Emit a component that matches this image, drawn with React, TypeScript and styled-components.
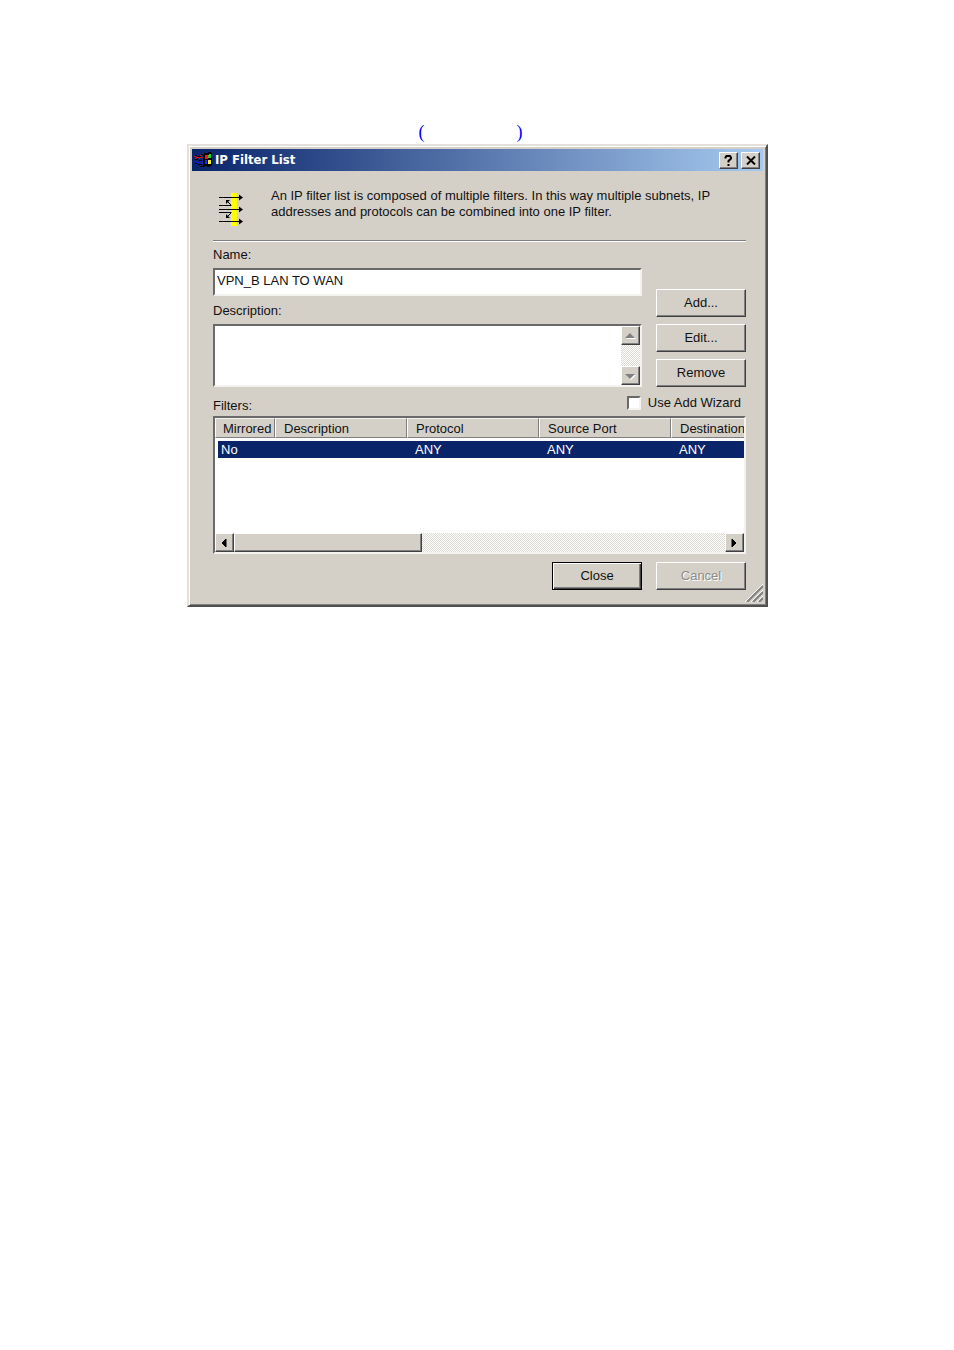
import React, { useState } from "react";
import styled, { createGlobalStyle, css } from "styled-components";

const face = "#d4d0c8";
const navy = "#0a246a";

const GlobalStyle = createGlobalStyle`
  * { box-sizing: border-box; }
  body {
    margin: 0;
    background: #fff;
    color: #111;
    font-family: "Liberation Sans", Arial, sans-serif;
    font-size: 13px;
    line-height: 16px;
  }
  button, input, textarea { font: inherit; color: inherit; }
`;

const raised = css`
  border: 1px solid;
  border-color: #fff #404040 #404040 #fff;
  box-shadow: inset -1px -1px 0 #808080;
`;

const sunken = css`
  border: 2px solid;
  border-color: #6a6a6a #f4f3f0 #f4f3f0 #6a6a6a;
  background: #fff;
`;

const Page = styled.main`
  padding: 122px 8px 40px 9px;
`;

const Caption = styled.p`
  display: flex;
  justify-content: center;
  gap: 92px;
  margin: 0;
  padding: 0 14px 2px 0;
  color: #00f;
  font-family: "Liberation Serif", serif;
  font-size: 18px;
  line-height: 20px;
`;

const Dialog = styled.section`
  width: 100%;
  max-width: 581px;
  margin: 0 auto;
  padding: 3px;
  background: ${face};
  border: 2px solid;
  border-color: #e4e1dc #505050 #505050 #e4e1dc;
  box-shadow: inset 1px 1px 0 #fff, inset -1px -1px 0 #808080;
`;

const TitleBar = styled.header`
  display: flex;
  align-items: center;
  gap: 2px;
  height: 22px;
  padding: 0 3px 0 1px;
  background: linear-gradient(90deg, ${navy}, #a6caf0);
`;

const Title = styled.h1`
  flex: 1;
  margin: 0;
  color: #fff;
  font-family: "DejaVu Sans Condensed", "DejaVu Sans", sans-serif;
  font-stretch: condensed;
  font-size: 13px;
  font-weight: bold;
  line-height: 16px;
`;

const CaptionButton = styled.button`
  ${raised}
  display: grid;
  place-items: center;
  width: 19px;
  height: 17px;
  padding: 0;
  margin-left: 1px;
  background: ${face};
`;

const Body = styled.div`
  padding: 17px 17px 12px 21px;
`;

const Intro = styled.div`
  display: flex;
  gap: 27px;
  padding: 0 32px 14px 5px;

  svg { flex: none; margin-top: 4px; }
  p { margin: 0; }
`;

const Rule = styled.hr`
  margin: 0 0 5px;
  border: 0;
  border-top: 1px solid #808080;
  border-bottom: 1px solid #fff;
`;

const Columns = styled.div`
  display: flex;
  align-items: flex-end;
  gap: 14px;
`;

const Fields = styled.div`
  flex: 1;
  min-width: 0;
`;

const FieldLabel = styled.label`
  display: block;
  margin-bottom: 5px;
`;

const TextInput = styled.input`
  ${sunken}
  display: block;
  width: 100%;
  height: 28px;
  margin-bottom: 7px;
  padding: 0 2px 4px;
  outline: none;
`;

const AreaFrame = styled.div`
  ${sunken}
  display: flex;
  height: 63px;
`;

const Area = styled.textarea`
  flex: 1;
  min-width: 0;
  padding: 2px;
  border: 0;
  outline: none;
  resize: none;
  overflow: hidden;
  background: transparent;
`;

const Track = styled.div<{ $vertical?: boolean }>`
  display: flex;
  flex-direction: ${(p) => (p.$vertical ? "column" : "row")};
  justify-content: space-between;
  background: repeating-conic-gradient(#fff 0 25%, #dcd9d3 0 50%) 0 0 / 2px 2px;
`;

const ArrowButton = styled.button`
  ${raised}
  display: grid;
  place-items: center;
  flex: none;
  width: 19px;
  height: 19px;
  padding: 0;
  background: ${face};
`;

const Thumb = styled.div`
  ${raised}
  width: 188px;
  margin-right: auto;
  background: ${face};
`;

const Buttons = styled.div`
  display: flex;
  flex-direction: column;
  gap: 7px;
`;

const PushButton = styled.button<{ $primary?: boolean }>`
  ${raised}
  width: 90px;
  height: 28px;
  padding: 0;
  background: ${face};
  ${(p) =>
    p.$primary &&
    css`
      border-color: #000;
      box-shadow: inset 1px 1px 0 #fff, inset -1px -1px 0 #404040, inset -2px -2px 0 #808080;
    `}
  &:disabled {
    color: #8e8c88;
    text-shadow: 1px 1px 0 #fff;
  }
`;

const FilterHeading = styled.div`
  display: flex;
  justify-content: space-between;
  align-items: center;
  height: 29px;
  padding: 2px 5px 0 0;
`;

const FilterTitle = styled.span`
  padding-top: 6px;
`;

const CheckLabel = styled.label`
  display: flex;
  align-items: center;
  gap: 7px;
`;

const CheckBox = styled.input`
  ${sunken}
  appearance: none;
  width: 14px;
  height: 14px;
  margin: 0;
  &:checked {
    background: radial-gradient(#000 40%, #fff 45%);
  }
`;

const ListBox = styled.div`
  ${sunken}
  display: flex;
  flex-direction: column;
  justify-content: space-between;
  height: 138px;
  overflow: hidden;
`;

const FilterTable = styled.table`
  width: 100%;
  table-layout: fixed;
  border-spacing: 0;

  th, td {
    overflow: hidden;
    white-space: nowrap;
    text-align: left;
    font-weight: normal;
  }
  th {
    height: 20px;
    padding: 1px 0 0 8px;
    background: ${face};
    border: 1px solid;
    border-color: #f4f3f0 #808080 #808080 #fff;
  }
  th:first-child { padding-left: 7px; }
  th:last-child { border-right: 0; }
  td {
    height: 20px;
    padding: 0 0 0 8px;
    color: #fff;
    background: ${navy};
    background-clip: padding-box;
    border-top: 3px solid #fff;
  }
  td:first-child {
    padding-left: 3px;
    border-left: 3px solid #fff;
  }
`;

const Footer = styled.footer`
  display: flex;
  justify-content: flex-end;
  gap: 14px;
  padding-top: 8px;
`;

const Corner = styled.div`
  display: flex;
  justify-content: flex-end;
  height: 18px;
  margin-top: -18px;
`;

function FlagIcon() {
  return (
    <svg width="20" height="16" viewBox="0 0 20 16" shapeRendering="crispEdges" aria-hidden="true">
      <path fill="#000" d="M11 1h4v-1h3v1h1v13h-2v1h-3v-1h-2v1h-2v-12h1zM2 3h2v1h-2zM5 4h3v1h-3zM2 7h3v1h-3zM6 8h3v1h-3zM2 11h2v1h-2zM5 12h4v1h-4zM8 2h2v1h-2zM7 14h3v1h-3z" />
      <path fill="#d01028" d="M1 4h2v1h-2zM3 5h3v1h-3zM6 6h1v1h-1zM7 5h3v1h-3zM2 6h2v1h-2zM7 3h2v1h-2z" />
      <path fill="#1818d8" d="M1 9h2v1h-2zM3 10h3v1h-3zM6 11h4v1h-4zM2 12h2v1h-2zM7 9h3v1h-3z" />
      <path fill="#f01828" d="M12 3h3v4h-3z" />
      <path fill="#20d820" d="M16 2h2v4h-2zM15 3h1v3h-1z" />
      <path fill="#1828f8" d="M12 8h2v4h-2z" />
      <path fill="#f8f020" d="M15 8h3v4h-3z" />
    </svg>
  );
}

function FilterIcon() {
  return (
    <svg width="26" height="34" viewBox="0 0 26 34" aria-hidden="true">
      <path fill="#ff0" d="M13 1h6v33h-6z" />
      <path
        stroke="#000"
        fill="none"
        d="M1 5.500h22M1 17.500h22M1 29.500h22M1 13.500h12.500M1 20.500h12.500M9.500 9.500l3.500 3.500M9.500 24.500l3.500 -3.500"
      />
      <path d="M8 8h4l-4 4zM8 26h4l-4 -4z" />
      <path d="M21 2.500l4 3l-4 3zM21 14.500l4 3l-4 3zM21 26.500l4 3l-4 3z" />
    </svg>
  );
}

const arrows = {
  up: "M0 7h10l-5 -5z",
  down: "M0 3h10l-5 5z",
  left: "M7 1v8l-4 -4z",
  right: "M3 1v8l4 -4z",
};

function Arrow({ dir, muted }: { dir: keyof typeof arrows; muted?: boolean }) {
  return (
    <svg width="11" height="10" viewBox="0 0 11 10" aria-hidden="true">
      {muted && <path d={arrows[dir]} fill="#fff" transform="translate(1 1)" />}
      <path d={arrows[dir]} fill={muted ? "#808080" : "#000"} stroke={muted ? "none" : "#000"} />
    </svg>
  );
}

export default function App() {
  const [name, setName] = useState("VPN_B LAN TO WAN");
  const [description, setDescription] = useState("");

  return (
    <Page>
      <GlobalStyle />
      <Caption>
        <span>(</span>
        <span>)</span>
      </Caption>
      <Dialog role="dialog" aria-labelledby="dialog-title">
        <TitleBar>
          <FlagIcon />
          <Title id="dialog-title">IP Filter List</Title>
          <CaptionButton aria-label="Help">
            <svg width="9" height="11" viewBox="0 0 9 11" aria-hidden="true">
              <path d="M1.500 3.500v-1l1 -1.500h3.500l1 1.500v1l-2.500 2.500v1.500" fill="none" stroke="#000" strokeWidth="2" />
              <path d="M3.500 9h2v2h-2z" />
            </svg>
          </CaptionButton>
          <CaptionButton aria-label="Close window">
            <svg width="10" height="9" viewBox="0 0 10 9" aria-hidden="true">
              <path d="M1 0.500l8 8M9 0.500l-8 8" stroke="#000" strokeWidth="2" />
            </svg>
          </CaptionButton>
        </TitleBar>
        <Body>
          <Intro>
            <FilterIcon />
            <p>
              An IP filter list is composed of multiple filters. In this way multiple subnets, IP
              addresses and protocols can be combined into one IP filter.
            </p>
          </Intro>
          <Rule />
          <Columns>
            <Fields>
              <FieldLabel htmlFor="name">Name:</FieldLabel>
              <TextInput id="name" value={name} onChange={(e) => setName(e.target.value)} />
              <FieldLabel htmlFor="description">Description:</FieldLabel>
              <AreaFrame>
                <Area id="description" value={description} onChange={(e) => setDescription(e.target.value)} />
                <Track $vertical>
                  <ArrowButton aria-label="Scroll up"><Arrow dir="up" muted /></ArrowButton>
                  <ArrowButton aria-label="Scroll down"><Arrow dir="down" muted /></ArrowButton>
                </Track>
              </AreaFrame>
            </Fields>
            <Buttons>
              <PushButton>Add...</PushButton>
              <PushButton>Edit...</PushButton>
              <PushButton>Remove</PushButton>
            </Buttons>
          </Columns>
          <FilterHeading>
            <FilterTitle id="filters">Filters:</FilterTitle>
            <CheckLabel>
              <CheckBox type="checkbox" />
              Use Add Wizard
            </CheckLabel>
          </FilterHeading>
          <ListBox>
            <FilterTable aria-labelledby="filters">
              <colgroup>
                <col width="60" />
                <col width="132" />
                <col width="132" />
                <col width="132" />
                <col />
              </colgroup>
              <thead>
                <tr>
                  <th>Mirrored</th>
                  <th>Description</th>
                  <th>Protocol</th>
                  <th>Source Port</th>
                  <th>Destination</th>
                </tr>
              </thead>
              <tbody>
                <tr>
                  <td>No</td>
                  <td />
                  <td>ANY</td>
                  <td>ANY</td>
                  <td>ANY</td>
                </tr>
              </tbody>
            </FilterTable>
            <Track>
              <ArrowButton aria-label="Scroll left"><Arrow dir="left" /></ArrowButton>
              <Thumb />
              <ArrowButton aria-label="Scroll right"><Arrow dir="right" /></ArrowButton>
            </Track>
          </ListBox>
          <Footer>
            <PushButton $primary>Close</PushButton>
            <PushButton disabled>Cancel</PushButton>
          </Footer>
        </Body>
        <Corner>
          <svg width="18" height="18" viewBox="0 0 18 18" aria-hidden="true">
            <path d="M0 18L18 0M6 18L18 6M12 18L18 12" stroke="#fff" />
            <path d="M2 18L18 2M8 18L18 8M14 18L18 14" stroke="#808080" strokeWidth="2" />
          </svg>
        </Corner>
      </Dialog>
    </Page>
  );
}
